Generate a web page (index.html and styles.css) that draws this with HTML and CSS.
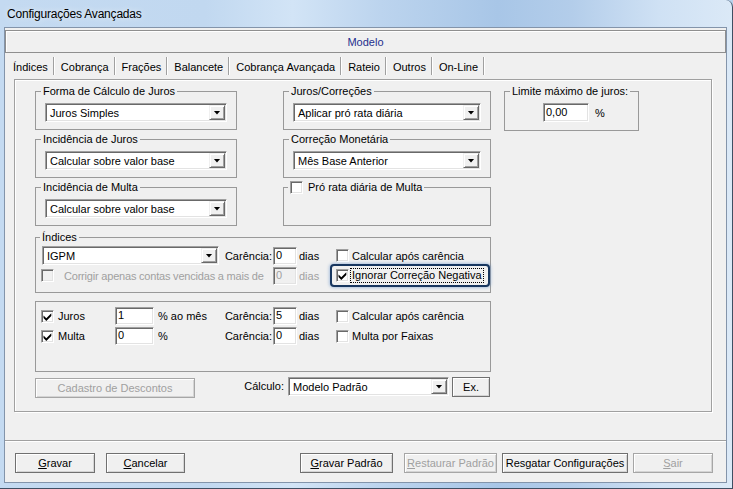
FILE: index.html
```html
<!DOCTYPE html>
<html lang="pt-BR">
<head>
<meta charset="utf-8">
<title>Configurações Avançadas</title>
<link rel="stylesheet" href="styles.css">
</head>
<body>
<div class="window">
  <div class="titlebar">Configurações Avançadas</div>
  <div class="client">
    <div class="modelo">Modelo</div>
    <div class="tabs">
      <span class="tab active">Índices</span>
      <span class="tab">Cobrança</span>
      <span class="tab">Frações</span>
      <span class="tab">Balancete</span>
      <span class="tab">Cobrança Avançada</span>
      <span class="tab">Rateio</span>
      <span class="tab">Outros</span>
      <span class="tab">On-Line</span>
    </div>
    <div class="page">
      <div class="top">
        <div class="col col-left">
          <fieldset class="grp">
            <legend>Forma de Cálculo de Juros</legend>
            <div class="combo"><span class="val">Juros Simples</span><span class="drop"></span></div>
          </fieldset>
          <fieldset class="grp">
            <legend>Incidência de Juros</legend>
            <div class="combo"><span class="val">Calcular sobre valor base</span><span class="drop"></span></div>
          </fieldset>
          <fieldset class="grp">
            <legend>Incidência de Multa</legend>
            <div class="combo"><span class="val">Calcular sobre valor base</span><span class="drop"></span></div>
          </fieldset>
        </div>
        <div class="col col-mid">
          <fieldset class="grp">
            <legend>Juros/Correções</legend>
            <div class="combo"><span class="val">Aplicar pró rata diária</span><span class="drop"></span></div>
          </fieldset>
          <fieldset class="grp">
            <legend>Correção Monetária</legend>
            <div class="combo"><span class="val">Mês Base Anterior</span><span class="drop"></span></div>
          </fieldset>
          <fieldset class="grp grp-check">
            <legend><span class="leg-row"><span class="cb"></span><span class="leg-txt">Pró rata diária de Multa</span></span></legend>
            <div class="spacer"></div>
          </fieldset>
        </div>
        <div class="col col-right">
          <fieldset class="grp limite">
            <legend>Limite máximo de juros:</legend>
            <div class="limite-row"><span class="edit w46">0,00</span><span class="pct">%</span></div>
          </fieldset>
        </div>
      </div>

      <fieldset class="grp indices">
        <legend>Índices</legend>
        <div class="line">
          <div class="combo c-idx"><span class="val">IGPM</span><span class="drop"></span></div>
          <span class="c-lbl">Carência:</span>
          <span class="edit c-num">0</span>
          <span class="c-unit">dias</span>
          <span class="c-chk"><span class="cb"></span><span class="txt">Calcular após carência</span></span>
        </div>
        <div class="line">
          <span class="c-long disabled"><span class="cb"></span><span class="txt">Corrigir apenas contas vencidas a mais de</span></span>
          <span class="edit c-num disabled">0</span>
          <span class="c-unit disabled">dias</span>
          <span class="c-chk-f">
            <span class="focus">
              <span class="cb"><svg viewBox="0 0 11 11"><path d="M1.5 4.5 L4.3 7.2 L9.3 2.2 L9.3 4.9 L4.3 9.9 L1.5 7.1 Z" fill="#000"/></svg></span>
              <span class="dotted">Ignorar Correção Negativa</span>
            </span>
          </span>
        </div>
      </fieldset>

      <div class="box jm">
        <div class="line">
          <span class="c-a"><span class="cb"><svg viewBox="0 0 11 11"><path d="M1.5 4.5 L4.3 7.2 L9.3 2.2 L9.3 4.9 L4.3 9.9 L1.5 7.1 Z" fill="#000"/></svg></span><span class="txt">Juros</span></span>
          <span class="c-b"><span class="edit w39">1</span><span class="txt">% ao mês</span></span>
          <span class="c-lbl">Carência:</span>
          <span class="edit c-num">5</span>
          <span class="c-unit">dias</span>
          <span class="c-chk"><span class="cb"></span><span class="txt">Calcular após carência</span></span>
        </div>
        <div class="line">
          <span class="c-a"><span class="cb"><svg viewBox="0 0 11 11"><path d="M1.5 4.5 L4.3 7.2 L9.3 2.2 L9.3 4.9 L4.3 9.9 L1.5 7.1 Z" fill="#000"/></svg></span><span class="txt">Multa</span></span>
          <span class="c-b"><span class="edit w39">0</span><span class="txt">%</span></span>
          <span class="c-lbl">Carência:</span>
          <span class="edit c-num">0</span>
          <span class="c-unit">dias</span>
          <span class="c-chk"><span class="cb"></span><span class="txt">Multa por Faixas</span></span>
        </div>
      </div>

      <div class="actions">
        <span class="btn off b-cad">Cadastro de Descontos</span>
        <span class="calc-lbl">Cálculo:</span>
        <div class="combo c-calc"><span class="val">Modelo Padrão</span><span class="drop"></span></div>
        <span class="btn b-ex">Ex.</span>
      </div>
    </div>

    <div class="bottom">
      <span class="btn b1"><span><u>G</u>ravar</span></span>
      <span class="btn b2"><span><u>C</u>ancelar</span></span>
      <span class="btn b3"><span><u>G</u>ravar Padrão</span></span>
      <span class="btn off b4"><span><u>R</u>estaurar Padrão</span></span>
      <span class="btn b5">Resgatar Configurações</span>
      <span class="btn off b6"><span><u>S</u>air</span></span>
    </div>
  </div>
</div>
</body>
</html>
```

FILE: styles.css
```css
* { box-sizing: border-box; }
html, body { margin: 0; padding: 0; }
body {
  width: 733px;
  height: 489px;
  overflow: hidden;
  background: #b9d2ec;
  font-family: "Liberation Sans", Arial, sans-serif;
  font-size: 11px;
  color: #000;
}

/* window frame */
.window {
  width: 733px;
  height: 489px;
  display: flex;
  flex-direction: column;
  border-right: 1px solid #3f4f63;
  border-bottom: 1px solid #3f4f63;
  border-top-right-radius: 7px;
  background: linear-gradient(90deg, #c4daf1 0%, #c1d8f0 28%, #d2e4f6 40%, #bcd4ee 52%, #a8c6e7 68%, #b3cdea 78%, #cfe1f4 90%, #dbe9f7 100%);
}
.titlebar {
  flex: none;
  height: 28px;
  padding: 7px 0 0 7px;
  font-size: 12px;
  line-height: 15px;
  letter-spacing: -0.2px;
  white-space: nowrap;
  text-shadow: 0 0 6px rgba(255, 255, 255, 0.8);
}
.client {
  flex: 1;
  display: flex;
  flex-direction: column;
  margin: 0 6px 6px 5px;
  background: #f0f0f0;
  box-shadow: 0 0 0 1px #8394aa;
}

/* header */
.modelo {
  flex: none;
  height: 23px;
  margin-top: 2px;
  padding-top: 2px;
  line-height: 19px;
  text-align: center;
  color: #1f2e8e;
  border: 1px solid #8f8f8f;
  box-shadow: inset 1px 1px 0 #fff;
}

/* tabs */
.tabs {
  flex: none;
  display: flex;
  height: 22px;
  margin-top: 2px;
  padding: 2px 0 0 2px;
}
.tab {
  flex: none;
  height: 18px;
  padding: 3px 5px 0 6px;
  line-height: 15px;
  border-right: 1px solid #a0a0a0;
  box-shadow: 1px 0 0 #fff;
  margin-right: 1px;
  white-space: nowrap;
}

/* tab page */
.page {
  flex: none;
  height: 333px;
  margin: 2px 14px 0 9px;
  padding: 5px 0 0 20px;
  border: 1px solid #a0a0a0;
  box-shadow: inset 1px 1px 0 #fff, 1px 1px 0 #fff;
}
.top { display: flex; align-items: flex-start; }
.col { flex: none; display: flex; flex-direction: column; gap: 3px; }
.col-left { width: 202px; }
.col-mid { width: 208px; margin-left: 46px; }
.col-right { width: 135px; margin-left: 13px; }

fieldset.grp {
  margin: 0;
  min-width: 0;
  padding: 5px 9px 7px 9px;
  border: 1px solid #999;
}
fieldset.grp legend {
  padding: 0 2px;
  margin-left: -4px;
  height: 13px;
  line-height: 13px;
  white-space: nowrap;
}
fieldset.grp-check legend { margin-left: -5px; }
.leg-row { display: flex; align-items: center; height: 13px; }
.leg-txt { margin-left: 5px; }
.spacer { height: 19px; }

/* controls */
.combo {
  flex: none;
  display: flex;
  height: 19px;
  padding: 1px;
  background: #fff;
  border: 1px solid;
  border-color: #a0a0a0 #fff #fff #a0a0a0;
  box-shadow: inset 1px 1px 0 #696969, inset -1px -1px 0 #e3e3e3;
}
.combo .val {
  flex: 1;
  min-width: 0;
  padding: 1px 0 0 3px;
  line-height: 14px;
  white-space: nowrap;
  overflow: hidden;
}
.drop {
  flex: none;
  width: 16px;
  display: flex;
  align-items: center;
  justify-content: center;
  background: #f0f0f0;
  border: 1px solid;
  border-color: #f0f0f0 #696969 #696969 #f0f0f0;
  box-shadow: inset 1px 1px 0 #fff, inset -1px -1px 0 #a0a0a0;
}
.drop::after {
  content: "";
  width: 7px;
  height: 4px;
  background: #000;
  clip-path: polygon(0 0, 100% 0, 50% 100%);
}
.edit {
  display: block;
  flex: none;
  height: 18px;
  padding: 0 0 0 2px;
  line-height: 14px;
  background: #fff;
  border: 1px solid;
  border-color: #a0a0a0 #fff #fff #a0a0a0;
  box-shadow: inset 1px 1px 0 #696969, inset -1px -1px 0 #e3e3e3;
  white-space: nowrap;
}
.edit.disabled { background: #f0f0f0; }
.w39 { width: 39px; }
.w46 { width: 46px; height: 19px; line-height: 16px; }
.cb {
  flex: none;
  display: block;
  width: 13px;
  height: 13px;
  background: #fff;
  border: 1px solid;
  border-color: #a0a0a0 #fff #fff #a0a0a0;
  box-shadow: inset 1px 1px 0 #696969, inset -1px -1px 0 #e3e3e3;
}
.cb svg { display: block; width: 11px; height: 11px; }
.disabled { color: #a0a0a0; }
.disabled .cb { background: #f0f0f0; }

/* limite */
fieldset.limite { padding-bottom: 8px; }
.limite-row { display: flex; align-items: center; margin-left: 29px; }
.pct { margin-left: 6px; }

/* rows */
fieldset.indices { width: 456px; margin-top: 5px; padding: 2px 0 7px 5px; }
fieldset.indices legend { margin-left: -1px; }
.line { display: flex; align-items: center; height: 19px; white-space: nowrap; }
.line + .line { margin-top: 1px; }
.jm .line { height: 18px; }
.jm .line + .line { margin-top: 2px; }
.c-idx { width: 177px; margin-left: 1px; }
.c-lbl { flex: none; width: 54px; text-align: right; padding-right: 1px; }
.c-num { width: 24px; }
.c-unit { flex: none; width: 33px; padding-left: 2px; }
.c-chk { flex: none; width: 160px; display: flex; align-items: center; padding-left: 6px; }
.c-chk .txt { margin-left: 3px; }
.c-a { flex: none; width: 74px; display: flex; align-items: center; }
.c-a .txt { margin-left: 4px; }
.c-b { flex: none; width: 104px; display: flex; align-items: center; }
.c-b .txt { margin-left: 4px; }
.c-long { flex: none; width: 232px; display: flex; align-items: center; overflow: hidden; }
.c-long .txt { margin-left: 10px; letter-spacing: -0.2px; }
.c-chk-f { flex: none; width: 160px; display: flex; align-items: center; }
.focus {
  flex: none;
  display: flex;
  align-items: center;
  width: 156px;
  height: 19px;
  margin-left: 2px;
  padding-left: 4px;
  border-radius: 2px;
  box-shadow: 0 0 0 2px #17365f, 0 0 3px 3px rgba(94, 140, 200, 0.45);
}
.dotted {
  margin-left: 1px;
  padding: 0 1px;
  border: 1px dotted #000;
  line-height: 13px;
}

.box { border: 1px solid #999; }
.jm { width: 456px; height: 71px; margin-top: 8px; padding: 5px 0 0 5px; }

/* buttons */
.btn {
  display: flex;
  align-items: center;
  justify-content: center;
  flex: none;
  height: 20px;
  line-height: 18px;
  border: 1px solid #707070;
  background: #f0f0f0;
  box-shadow: inset 1px 1px 0 #fff, inset -1px -1px 0 #d4d4d4;
  white-space: nowrap;
}
.btn.off { color: #a0a0a0; border-color: #a6a6a6; }

.actions { display: flex; align-items: flex-start; width: 456px; margin-top: 5px; }
.b-cad { width: 160px; margin-top: 1px; }
.calc-lbl { flex: none; width: 93px; height: 19px; line-height: 19px; text-align: right; padding-right: 4px; }
.c-calc { width: 161px; }
.b-ex { width: 38px; margin-left: 3px; }

.bottom {
  flex: 1;
  display: flex;
  align-items: flex-start;
  margin-top: 28px;
  padding: 12px 0 0 10px;
  border-top: 1px solid #a0a0a0;
  box-shadow: inset 0 1px 0 #fff;
}
.b1 { width: 80px; }
.b2 { width: 79px; margin-left: 11px; }
.b3 { width: 93px; margin-left: 115px; }
.b4 { width: 93px; margin-left: 11px; }
.b5 { width: 126px; margin-left: 5px; }
.b6 { width: 80px; margin-left: 5px; }
```
